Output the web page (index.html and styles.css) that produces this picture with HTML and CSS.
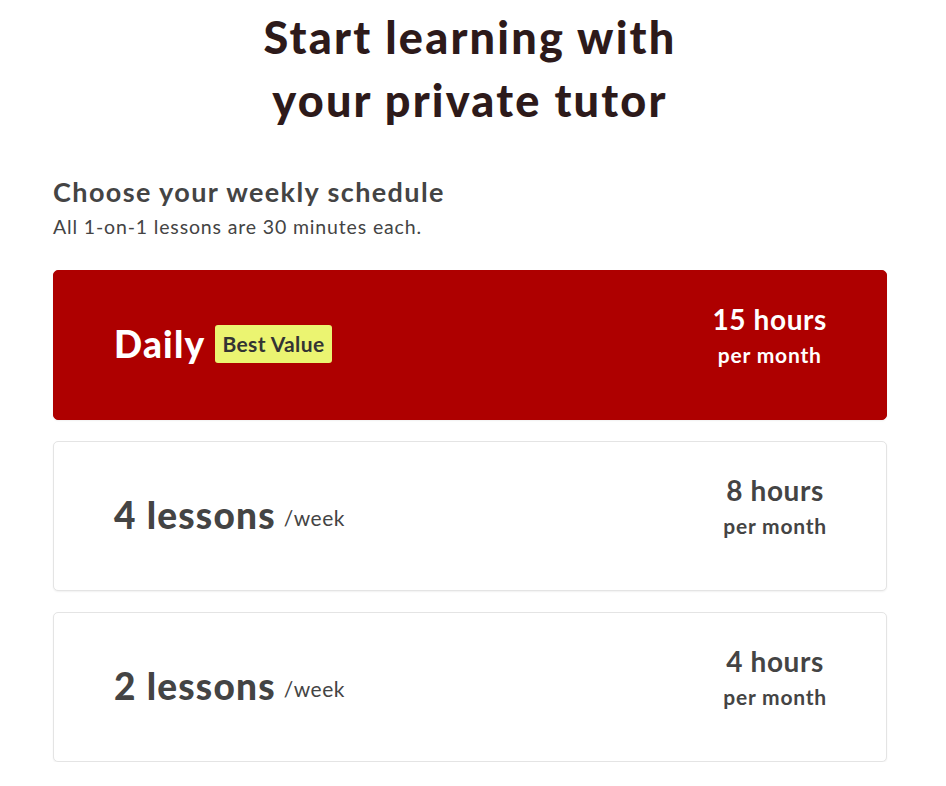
FILE: index.html
```html
<!DOCTYPE html>
<html lang="en">
<head>
<meta charset="utf-8">
<title>Start learning with your private tutor</title>
<link rel="stylesheet" href="styles.css">
</head>
<body>
<main class="page">
  <h1 class="title">Start learning with<br>your private tutor</h1>
  <section class="schedule">
    <h2 class="schedule-title">Choose your weekly schedule</h2>
    <p class="schedule-sub">All 1-on-1 lessons are 30 minutes each.</p>
    <div class="plans">
      <div class="plan plan-active">
        <div class="plan-left">
          <span class="plan-name">Daily</span>
          <span class="badge">Best Value</span>
        </div>
        <div class="plan-right">
          <div class="hours">15 hours</div>
          <div class="per">per month</div>
        </div>
      </div>
      <div class="plan">
        <div class="plan-left">
          <span class="plan-name">4 lessons</span>
          <span class="unit">/week</span>
        </div>
        <div class="plan-right">
          <div class="hours">8 hours</div>
          <div class="per">per month</div>
        </div>
      </div>
      <div class="plan">
        <div class="plan-left">
          <span class="plan-name">2 lessons</span>
          <span class="unit">/week</span>
        </div>
        <div class="plan-right">
          <div class="hours">4 hours</div>
          <div class="per">per month</div>
        </div>
      </div>
    </div>
  </section>
</main>
</body>
</html>
```
FILE: styles.css
```css
* { box-sizing: border-box; }
html, body { margin: 0; padding: 0; background: #fff; }
body { font-family: Lato, "Noto Sans", sans-serif; color: #444; }
.page { width: 834px; margin: 0 0 0 53px; padding-top: 6px; }
.title {
  margin: 0;
  text-align: center;
  font-size: 45px;
  line-height: 63px;
  font-weight: 900;
  letter-spacing: 2.2px;
  color: #2d1a1a;
}
.schedule { margin-top: 42px; }
.schedule-title {
  margin: 0;
  font-size: 27px;
  line-height: 36px;
  font-weight: 700;
  letter-spacing: 1.4px;
  color: #444;
}
.schedule-sub {
  margin: 4px 0 0;
  font-size: 19.5px;
  line-height: 26px;
  letter-spacing: 0.85px;
  color: #444;
}
.plans { margin-top: 30px; display: flex; flex-direction: column; gap: 21px; }
.plan {
  height: 150px;
  border-radius: 5px;
  border: 1px solid #e4e4e4;
  box-shadow: 0 1px 2px rgba(0,0,0,0.06);
  display: flex;
  align-items: center;
  justify-content: space-between;
  padding: 0 59px 0 60px;
  background: #fff;
}
.plan-active { background: #ae0000; border-color: #ae0000; color: #fff; }
.plan-left { display: flex; align-items: center; gap: 11px; margin-top: -2px; }
.plan-name { font-size: 37px; font-weight: 900; line-height: 44px; letter-spacing: 1.2px; }
.plan-active .plan-name { color: #fff; }
.badge {
  background: #ebf471;
  color: #333;
  font-size: 21px;
  line-height: 38px;
  padding: 0 7px;
  border-radius: 3px;
  font-weight: 700;
  letter-spacing: 0.4px;
  margin-left: -1px;
}
.unit { font-size: 21px; line-height: 28px; margin-top: 6px; margin-left: -3px; letter-spacing: 0.5px; }
.plan-right { text-align: center; margin-top: -20px; }
.hours { font-size: 28px; line-height: 36px; font-weight: 700; letter-spacing: 0.6px; }
.per { font-size: 21px; line-height: 28px; font-weight: 700; letter-spacing: 0.8px; margin-top: 4px; }
.plan-active .hours, .plan-active .per { color: #fff; }
```
